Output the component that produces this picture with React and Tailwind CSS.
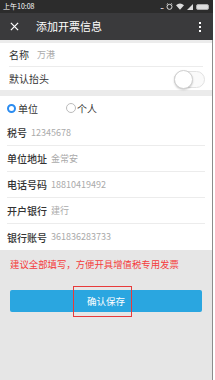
const font = { fontFamily: '"Noto Sans CJK SC", "Noto Sans", sans-serif' };

function StatusBar() {
  return (
    <div className="h-[13px] bg-[#2c2c2c] flex items-center justify-between pl-[3px] pr-[4px] text-white">
      <span className="text-[7px] leading-none">上午10:08</span>
      <div className="flex items-center gap-[3px]">
        <span className="text-[7px] leading-none tracking-[-1px]">...</span>
        <svg width="7" height="7" viewBox="0 0 10 10">
          <circle cx="5" cy="5.5" r="3.6" fill="none" stroke="#ddd" strokeWidth="1.4" />
          <path d="M1 2 L3 0.5 M9 2 L7 0.5" stroke="#ddd" strokeWidth="1.2" />
        </svg>
        <svg width="8" height="7" viewBox="0 0 12 10">
          <path d="M0 3 Q6 -2 12 3 L6 10 Z" fill="#ddd" />
        </svg>
        <svg width="6" height="6" viewBox="0 0 10 10">
          <path d="M0 10 L10 0 L10 10 Z" fill="#ddd" />
        </svg>
        <div className="w-[13px] h-[6px] rounded-[2px] bg-[#ddd] border border-[#aaa]" />
      </div>
    </div>
  );
}

function Header() {
  return (
    <div className="h-[27px] bg-[#3a3a3c] flex items-center text-white">
      <svg className="ml-[10px]" width="9" height="9" viewBox="0 0 10 10">
        <path d="M1 1 L9 9 M9 1 L1 9" stroke="white" strokeWidth="1.4" />
      </svg>
      <span className="ml-[17px] text-[11px] leading-none">添加开票信息</span>
      <div className="ml-auto mr-[12px] flex flex-col gap-[2px]">
        <span className="w-[2px] h-[2px] bg-white" />
        <span className="w-[2px] h-[2px] bg-white" />
        <span className="w-[2px] h-[2px] bg-white" />
      </div>
    </div>
  );
}

function Field({ label, value, last }) {
  return (
    <div className={`h-[26px] flex items-center ${last ? "" : "border-b border-[#ececec]"}`}>
      <span className="text-[10px] font-medium text-[#333]">{label}</span>
      <span className="ml-[4px] text-[9px] text-[#aaa]">{value}</span>
    </div>
  );
}

export default function App() {
  const fields = [
    ["税号", "12345678"],
    ["单位地址", "金常安"],
    ["电话号码", "18810419492"],
    ["开户银行", "建行"],
    ["银行账号", "361836283733"],
  ];
  return (
    <div className="w-[215px] h-[380px] bg-white overflow-hidden" style={font}>
      <div className="w-[213px]">
        <StatusBar />
        <Header />
      </div>
      <div className="w-[213px] h-[340px] border-r border-[#8c8c8c] bg-[#e8e8e8] flex flex-col">
        <div className="h-[3px] bg-[#ececec]" />
        <div className="bg-white">
          <div className="mx-[9px] h-[24px] flex items-center border-b border-[#ececec]">
            <span className="text-[10px] text-[#333]">名称</span>
            <span className="ml-[8px] text-[9px] text-[#aaa]">万港</span>
          </div>
          <div className="ml-[9px] mr-[7px] h-[23px] flex items-center justify-between">
            <span className="text-[10px] text-[#333]">默认抬头</span>
            <div className="relative w-[31px] h-[17px] rounded-full border border-[#e2e2e2] bg-[#fafafa] mt-[2px]">
              <div className="absolute -left-px -top-[2px] w-[19px] h-[19px] rounded-full bg-white border border-[#d0d0d0] shadow-[0_1px_2px_rgba(0,0,0,0.2)]" />
            </div>
          </div>
        </div>
        <div className="h-[6px] bg-[#ebebeb]" />
        <div className="bg-white px-[7px]">
          <div className="h-[24px] flex items-center">
            <span className="w-[9px] h-[9px] rounded-full border-[2.5px] border-[#2b8cf0]" />
            <span className="ml-[2px] text-[10px] text-[#333]">单位</span>
            <span className="ml-[28px] w-[10px] h-[10px] rounded-full border border-[#bbb]" />
            <span className="ml-[1px] text-[10px] text-[#333]">个人</span>
          </div>
          {fields.map(([l, v], i) => (
            <Field key={l} label={l} value={v} last={i === fields.length - 1} />
          ))}
        </div>
        <div className="flex-1 bg-[#e6e6e6] px-[10px] pt-[8px]">
          <p className="text-[9.4px] leading-[12px] text-[#f53b3b]">建议全部填写，方便开具增值税专用发票</p>
          <div className="relative mt-[20px] h-[22px] rounded-[2px] bg-[#2aa6e0] flex items-center justify-center">
            <span className="text-[9.5px] text-white">确认保存</span>
            <div className="absolute left-[63px] top-[-4px] w-[59px] h-[31px] border border-[#e83a3a]" />
          </div>
        </div>
      </div>
    </div>
  );
}
